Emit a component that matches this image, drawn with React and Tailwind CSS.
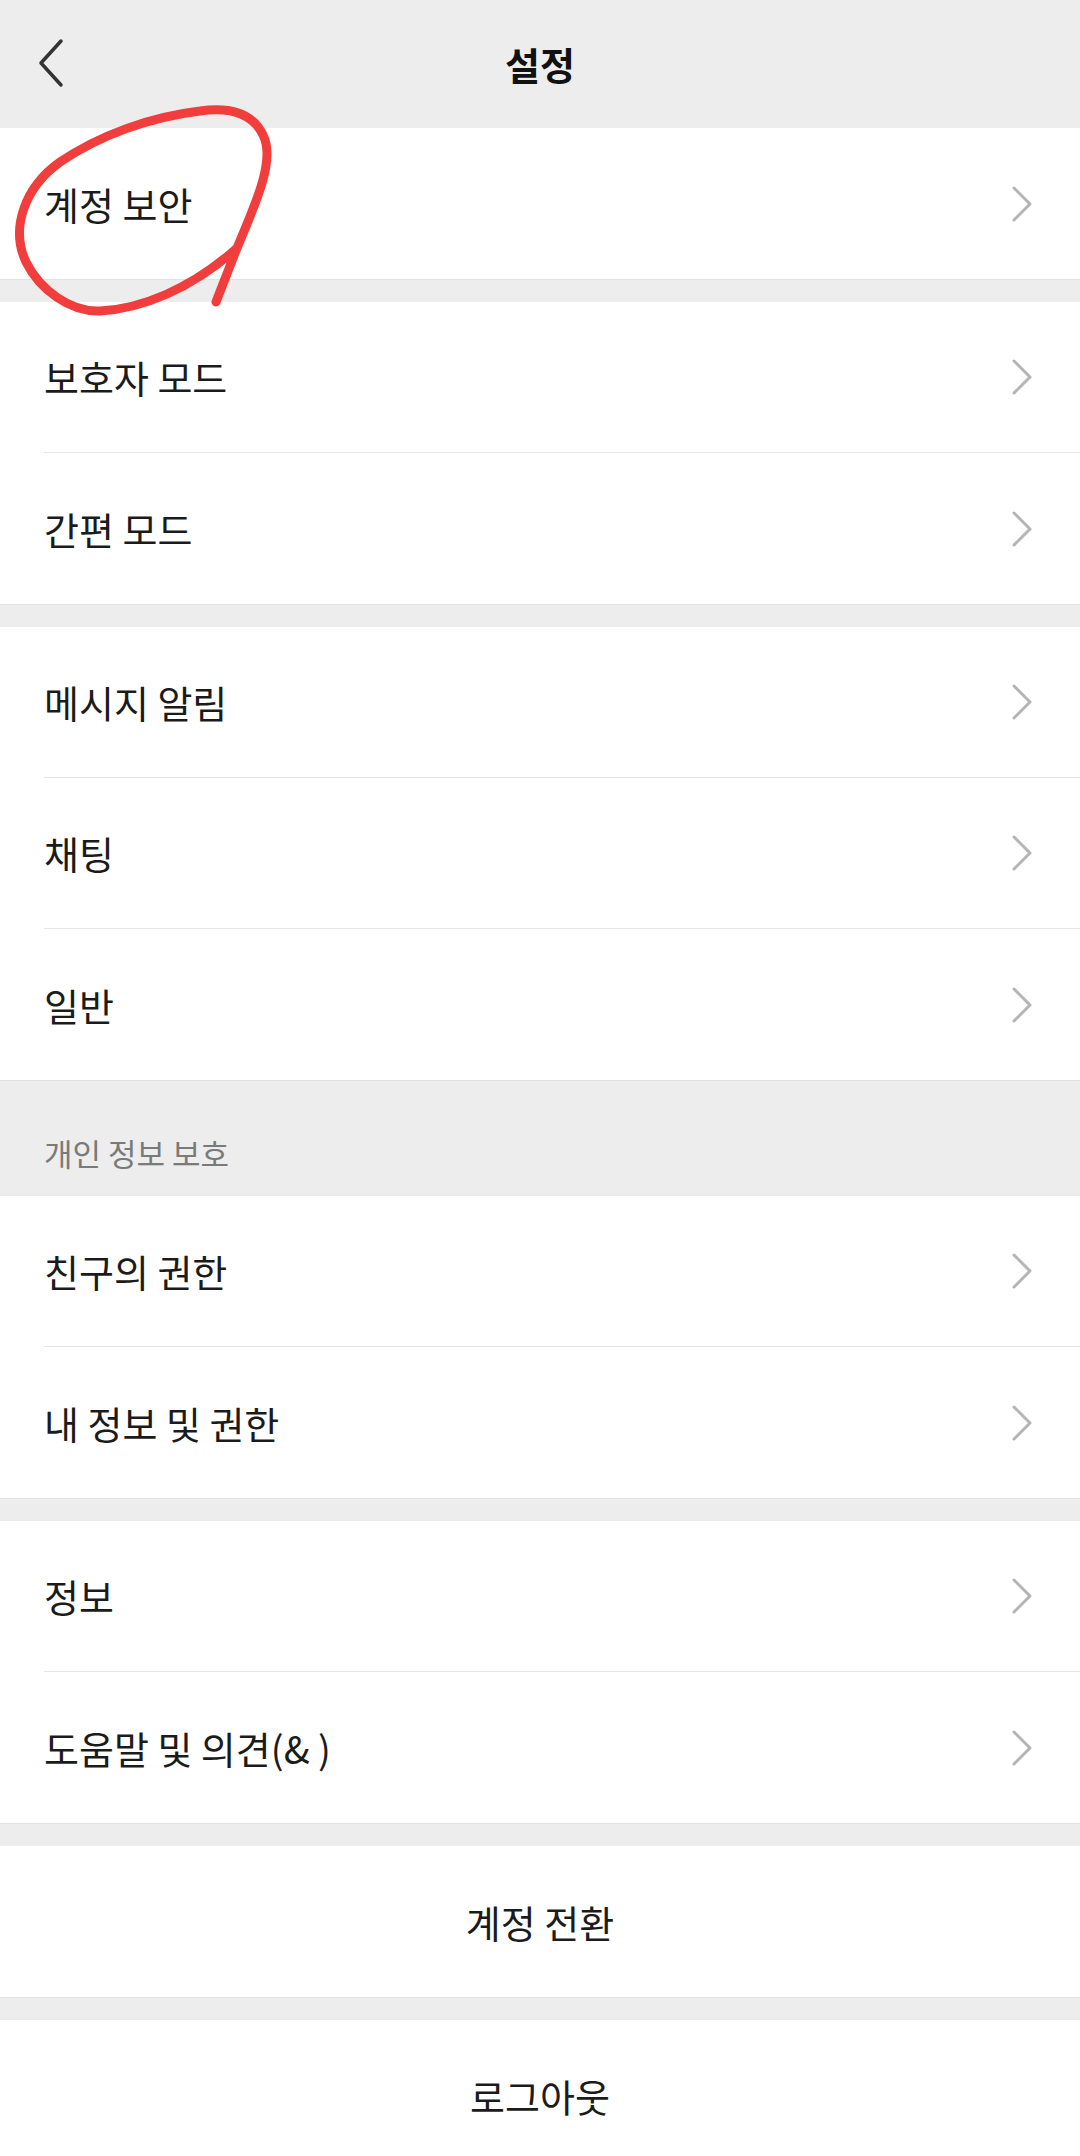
import React from "react";

const font = { fontFamily: '"Noto Sans CJK KR", "Noto Sans", sans-serif' };

function Chevron() {
  return (
    <svg width="22" height="36" viewBox="0 0 22 36" className="shrink-0">
      <path d="M3 2 L19 18 L3 34" fill="none" stroke="#b4b4b4" strokeWidth="3" strokeLinecap="round" strokeLinejoin="round" />
    </svg>
  );
}

function Row({ label, last }) {
  return (
    <div className="bg-white pl-[44px]">
      <div className={"h-[151px] flex items-center justify-between pr-[47px] " + (last ? "" : "border-b border-[#e6e6e6]")}>
        <span className="text-[38px] text-[#1b1b1b] leading-none">{label}</span>
        <Chevron />
      </div>
    </div>
  );
}

function Group({ items }) {
  return (
    <div className="flex flex-col">
      {items.map((t, i) => (
        <Row key={t} label={t} last={i === items.length - 1} />
      ))}
    </div>
  );
}

function Gap() {
  return <div className="h-[23px] bg-[#ededed] border-t border-[#e2e2e2]" />;
}

function Center({ label }) {
  return (
    <div className="h-[151px] bg-white flex items-center justify-center">
      <span className="text-[38px] text-[#1b1b1b] leading-none">{label}</span>
    </div>
  );
}

export default function App() {
  return (
    <div className="w-[1080px] h-[2156px] overflow-hidden bg-[#ededed] relative" style={font}>
      <div className="h-[128px] flex items-center justify-center relative">
        <svg className="absolute left-[36px] top-[38px]" width="30" height="50" viewBox="0 0 30 50">
          <path d="M25 3 L5 25 L25 47" fill="none" stroke="#333" strokeWidth="3.5" strokeLinecap="round" strokeLinejoin="round" />
        </svg>
        <span className="text-[38px] font-bold text-[#111] leading-none">설정</span>
      </div>
      <Group items={["계정 보안"]} />
      <Gap />
      <Group items={["보호자 모드", "간편 모드"]} />
      <Gap />
      <Group items={["메시지 알림", "채팅", "일반"]} />
      <div className="h-[116px] flex items-center pt-[28px] pl-[44px] border-t border-[#e2e2e2]">
        <span className="text-[31px] text-[#7a7a7a] leading-none">개인 정보 보호</span>
      </div>
      <Group items={["친구의 권한", "내 정보 및 권한"]} />
      <Gap />
      <Group items={["정보", "도움말 및 의견(& )"]} />
      <Gap />
      <Center label="계정 전환" />
      <Gap />
      <Center label="로그아웃" />
      <svg className="absolute left-0 top-0 pointer-events-none" width="400" height="400" viewBox="0 0 400 400">
        <path
          d="M216 302 L237 248 C255 205 276 160 263 135 C252 112 228 107 200 111 C150 117 100 135 60 162 C25 187 10 228 26 262 C40 290 70 312 100 311 C140 309 190 290 237 248"
          fill="none"
          stroke="#f23d3d"
          strokeWidth="9"
          strokeLinecap="round"
          strokeLinejoin="round"
        />
      </svg>
    </div>
  );
}
